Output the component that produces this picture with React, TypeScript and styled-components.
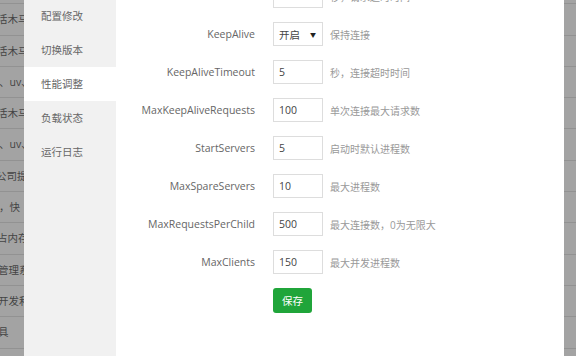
import React from 'react';
import styled, { createGlobalStyle } from 'styled-components';

const Global = createGlobalStyle`
  html, body { margin: 0; padding: 0; }
  body {
    width: 576px;
    height: 356px;
    overflow: hidden;
    background: #fff;
    font-family: "Open Sans", "Noto Sans CJK SC", sans-serif;
  }
`;

const Page = styled.div`
  display: flex;
  width: 576px;
  height: 356px;
  overflow: hidden;
`;

const BackdropStrip = styled.div<{ $w: number }>`
  flex: none;
  width: ${(p) => p.$w}px;
  height: 100%;
  overflow: hidden;
  background: #a3a3a3;
`;

const BgList = styled.div`
  margin-top: -27px;
`;

const BgRow = styled.div<{ $indent: number }>`
  height: 31.3px;
  line-height: 30px;
  box-sizing: border-box;
  border-bottom: 1px solid #929292;
  white-space: nowrap;
  font-size: 10.5px;
  color: #444;
  text-indent: ${(p) => p.$indent}px;
`;

const Modal = styled.div`
  flex: 1;
  display: flex;
  height: 100%;
  overflow: hidden;
`;

const Menu = styled.div`
  flex: none;
  width: 92px;
  background: #f1f1f1;
  margin-top: -1px;
`;

const MenuItem = styled.div<{ $active?: boolean }>`
  height: 34px;
  line-height: 34px;
  padding-left: 17px;
  font-size: 10.5px;
  color: #666;
  background: ${(p) => (p.$active ? '#fff' : 'transparent')};
`;

const Content = styled.div`
  flex: 1;
  background: #fff;
  display: flex;
  flex-direction: column;
  gap: 14px;
  margin-top: -16px;
`;

const FormRow = styled.div`
  display: flex;
  align-items: center;
  height: 24px;
`;

const Label = styled.div`
  width: 139px;
  flex: none;
  text-align: right;
  font-size: 10.5px;
  color: #666;
`;

const Field = styled.div`
  margin-left: 18px;
  width: 50px;
  height: 24px;
  box-sizing: border-box;
  border: 1px solid #ddd;
  padding: 0 5px;
  display: flex;
  align-items: center;
  justify-content: space-between;
  font-size: 10.5px;
  color: #444;
`;

const Arrow = styled.span`
  font-size: 6px;
  color: #222;
  margin-right: 1px;
`;

const Hint = styled.div`
  margin-left: 7px;
  font-size: 10px;
  color: #999;
  white-space: nowrap;
`;

const SaveButton = styled.button`
  margin-left: 157px;
  width: 39px;
  height: 25px;
  border: none;
  border-radius: 3px;
  background: #20a53a;
  color: #fff;
  font-family: inherit;
  font-size: 10.5px;
  padding: 0;
`;

const bgRows: [string, number][] = [
  ['', 0],
  ['活木马', -3],
  ['活木马', -3],
  ['、uv、', -1],
  ['活木马', -3],
  ['、uv、', -1],
  ['公司提', -4],
  ['，快', -1],
  ['占内存', -3],
  ['管理系', -2],
  ['开发和', -2],
  ['具', -2],
];

const rightRows = Array.from({ length: 12 }, () => ['', 0] as [string, number]);

const menu = ['配置修改', '切换版本', '性能调整', '负载状态', '运行日志'];

type Row = { label: string; value: string; hint: string; select?: boolean };

const rows: Row[] = [
  { label: 'Timeout', value: '120', hint: '秒，请求超时时间' },
  { label: 'KeepAlive', value: '开启', hint: '保持连接', select: true },
  { label: 'KeepAliveTimeout', value: '5', hint: '秒，连接超时时间' },
  { label: 'MaxKeepAliveRequests', value: '100', hint: '单次连接最大请求数' },
  { label: 'StartServers', value: '5', hint: '启动时默认进程数' },
  { label: 'MaxSpareServers', value: '10', hint: '最大进程数' },
  { label: 'MaxRequestsPerChild', value: '500', hint: '最大连接数，0为无限大' },
  { label: 'MaxClients', value: '150', hint: '最大并发进程数' },
];

export default function App() {
  return (
    <>
      <Global />
      <Page>
        <BackdropStrip $w={24}>
          <BgList>
            {bgRows.map(([t, i], k) => (
              <BgRow key={k} $indent={i}>
                {t}
              </BgRow>
            ))}
          </BgList>
        </BackdropStrip>
        <Modal>
          <Menu>
            {menu.map((m, k) => (
              <MenuItem key={m} $active={k === 2}>
                {m}
              </MenuItem>
            ))}
          </Menu>
          <Content>
            {rows.map((r) => (
              <FormRow key={r.label}>
                <Label>{r.label}</Label>
                <Field>
                  <span>{r.value}</span>
                  {r.select && <Arrow>▼</Arrow>}
                </Field>
                <Hint>{r.hint}</Hint>
              </FormRow>
            ))}
            <FormRow>
              <SaveButton>保存</SaveButton>
            </FormRow>
          </Content>
        </Modal>
        <BackdropStrip $w={12}>
          <BgList>
            {rightRows.map(([t, i], k) => (
              <BgRow key={k} $indent={i}>
                {t}
              </BgRow>
            ))}
          </BgList>
        </BackdropStrip>
      </Page>
    </>
  );
}
